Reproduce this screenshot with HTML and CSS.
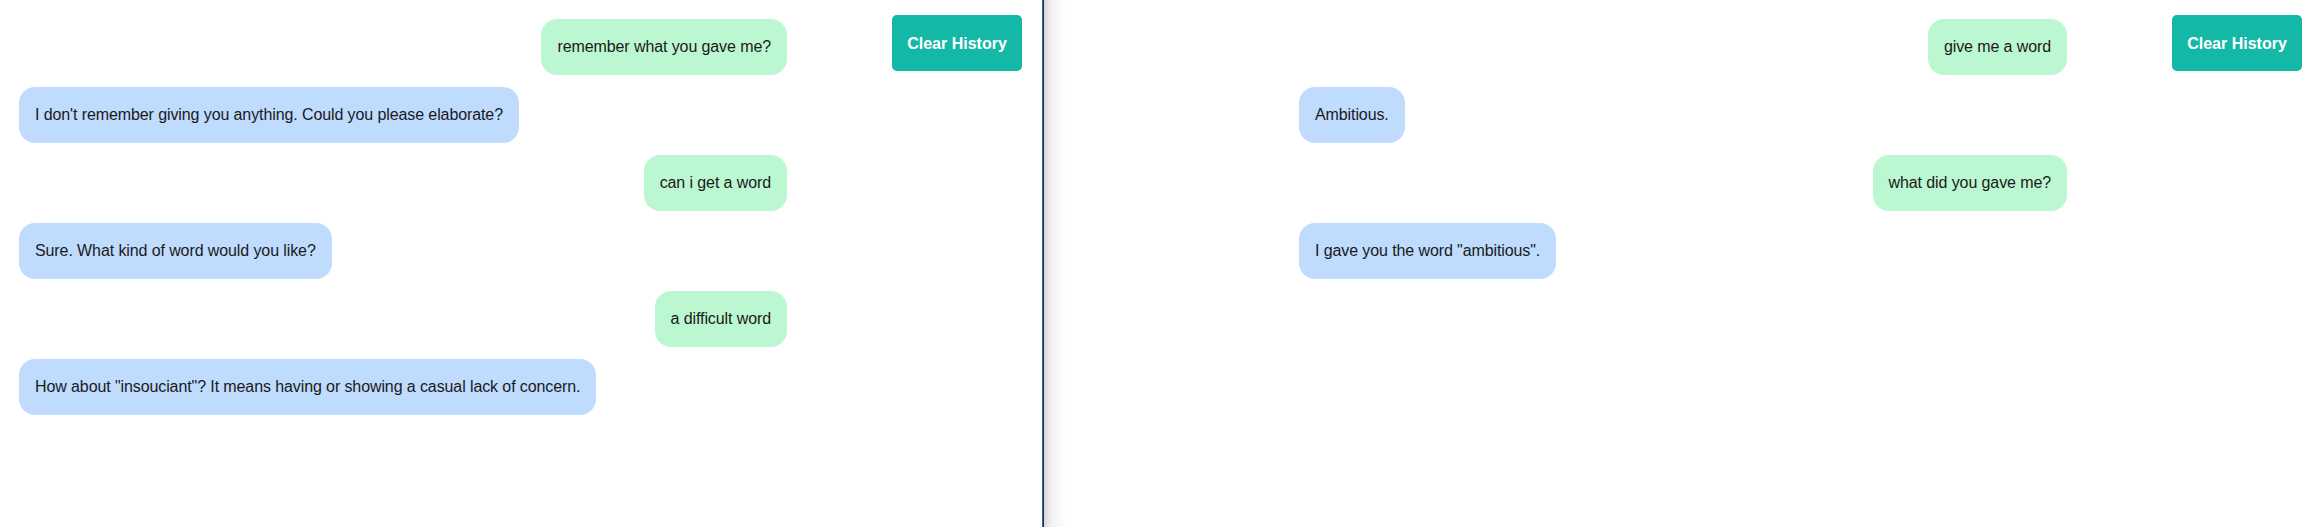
FILE: index.html
```html
<!DOCTYPE html>
<html lang="en">
<head>
<meta charset="utf-8">
<title>Chat</title>
<link rel="stylesheet" href="styles.css">
</head>
<body>
<div class="app">
  <section class="pane pane-left">
    <div class="chat">
      <div class="msg user">remember what you gave me?</div>
      <div class="msg bot">I don't remember giving you anything. Could you please elaborate?</div>
      <div class="msg user">can i get a word</div>
      <div class="msg bot">Sure. What kind of word would you like?</div>
      <div class="msg user">a difficult word</div>
      <div class="msg bot">How about "insouciant"? It means having or showing a casual lack of concern.</div>
    </div>
    <button class="clear">Clear History</button>
  </section>
  <div class="divider"></div>
  <section class="pane pane-right">
    <div class="chat">
      <div class="msg user">give me a word</div>
      <div class="msg bot">Ambitious.</div>
      <div class="msg user">what did you gave me?</div>
      <div class="msg bot">I gave you the word "ambitious".</div>
    </div>
    <button class="clear">Clear History</button>
  </section>
</div>
</body>
</html>
```
FILE: styles.css
```css
* { box-sizing: border-box; }
html, body { margin: 0; padding: 0; height: 100%; }
body {
  font-family: "Liberation Sans", Arial, sans-serif;
  font-size: 16px;
  color: #1a1a1a;
  background: #fff;
  overflow: hidden;
}
.app {
  display: flex;
  height: 100vh;
}
.pane {
  display: flex;
  align-items: flex-start;
  padding-top: 15px;
}
.pane-left {
  flex: none;
  width: 1042px;
  padding-left: 19px;
  padding-right: 20px;
}
.pane-right {
  flex: 1;
  padding-left: 255px;
  padding-right: 8px;
  background: linear-gradient(to right, #d9d9d9 0px, #f1f1f1 8px, #ffffff 22px);
}
.divider {
  flex: none;
  width: 2px;
  background: linear-gradient(to right, #1f6fd1 0 1px, #2b2b2b 1px 2px);
}
.chat {
  width: 768px;
  flex: none;
  padding-top: 4px;
  display: flex;
  flex-direction: column;
  gap: 12px;
}
.msg {
  padding: 16px;
  border-radius: 16px;
  line-height: 24px;
  font-size: 16px;
  letter-spacing: -0.1px;
}
.user {
  align-self: flex-end;
  background: #bbf7d0;
}
.bot {
  align-self: flex-start;
  background: #bfdbfe;
}
.clear {
  margin-left: auto;
  width: 130px;
  height: 56px;
  border: none;
  border-radius: 5px;
  background: #14b8a6;
  color: #fff;
  font-family: "Liberation Sans", Arial, sans-serif;
  font-weight: bold;
  font-size: 16px;
  line-height: 24px;
  padding: 17px 0 15px;
  cursor: pointer;
}
```
